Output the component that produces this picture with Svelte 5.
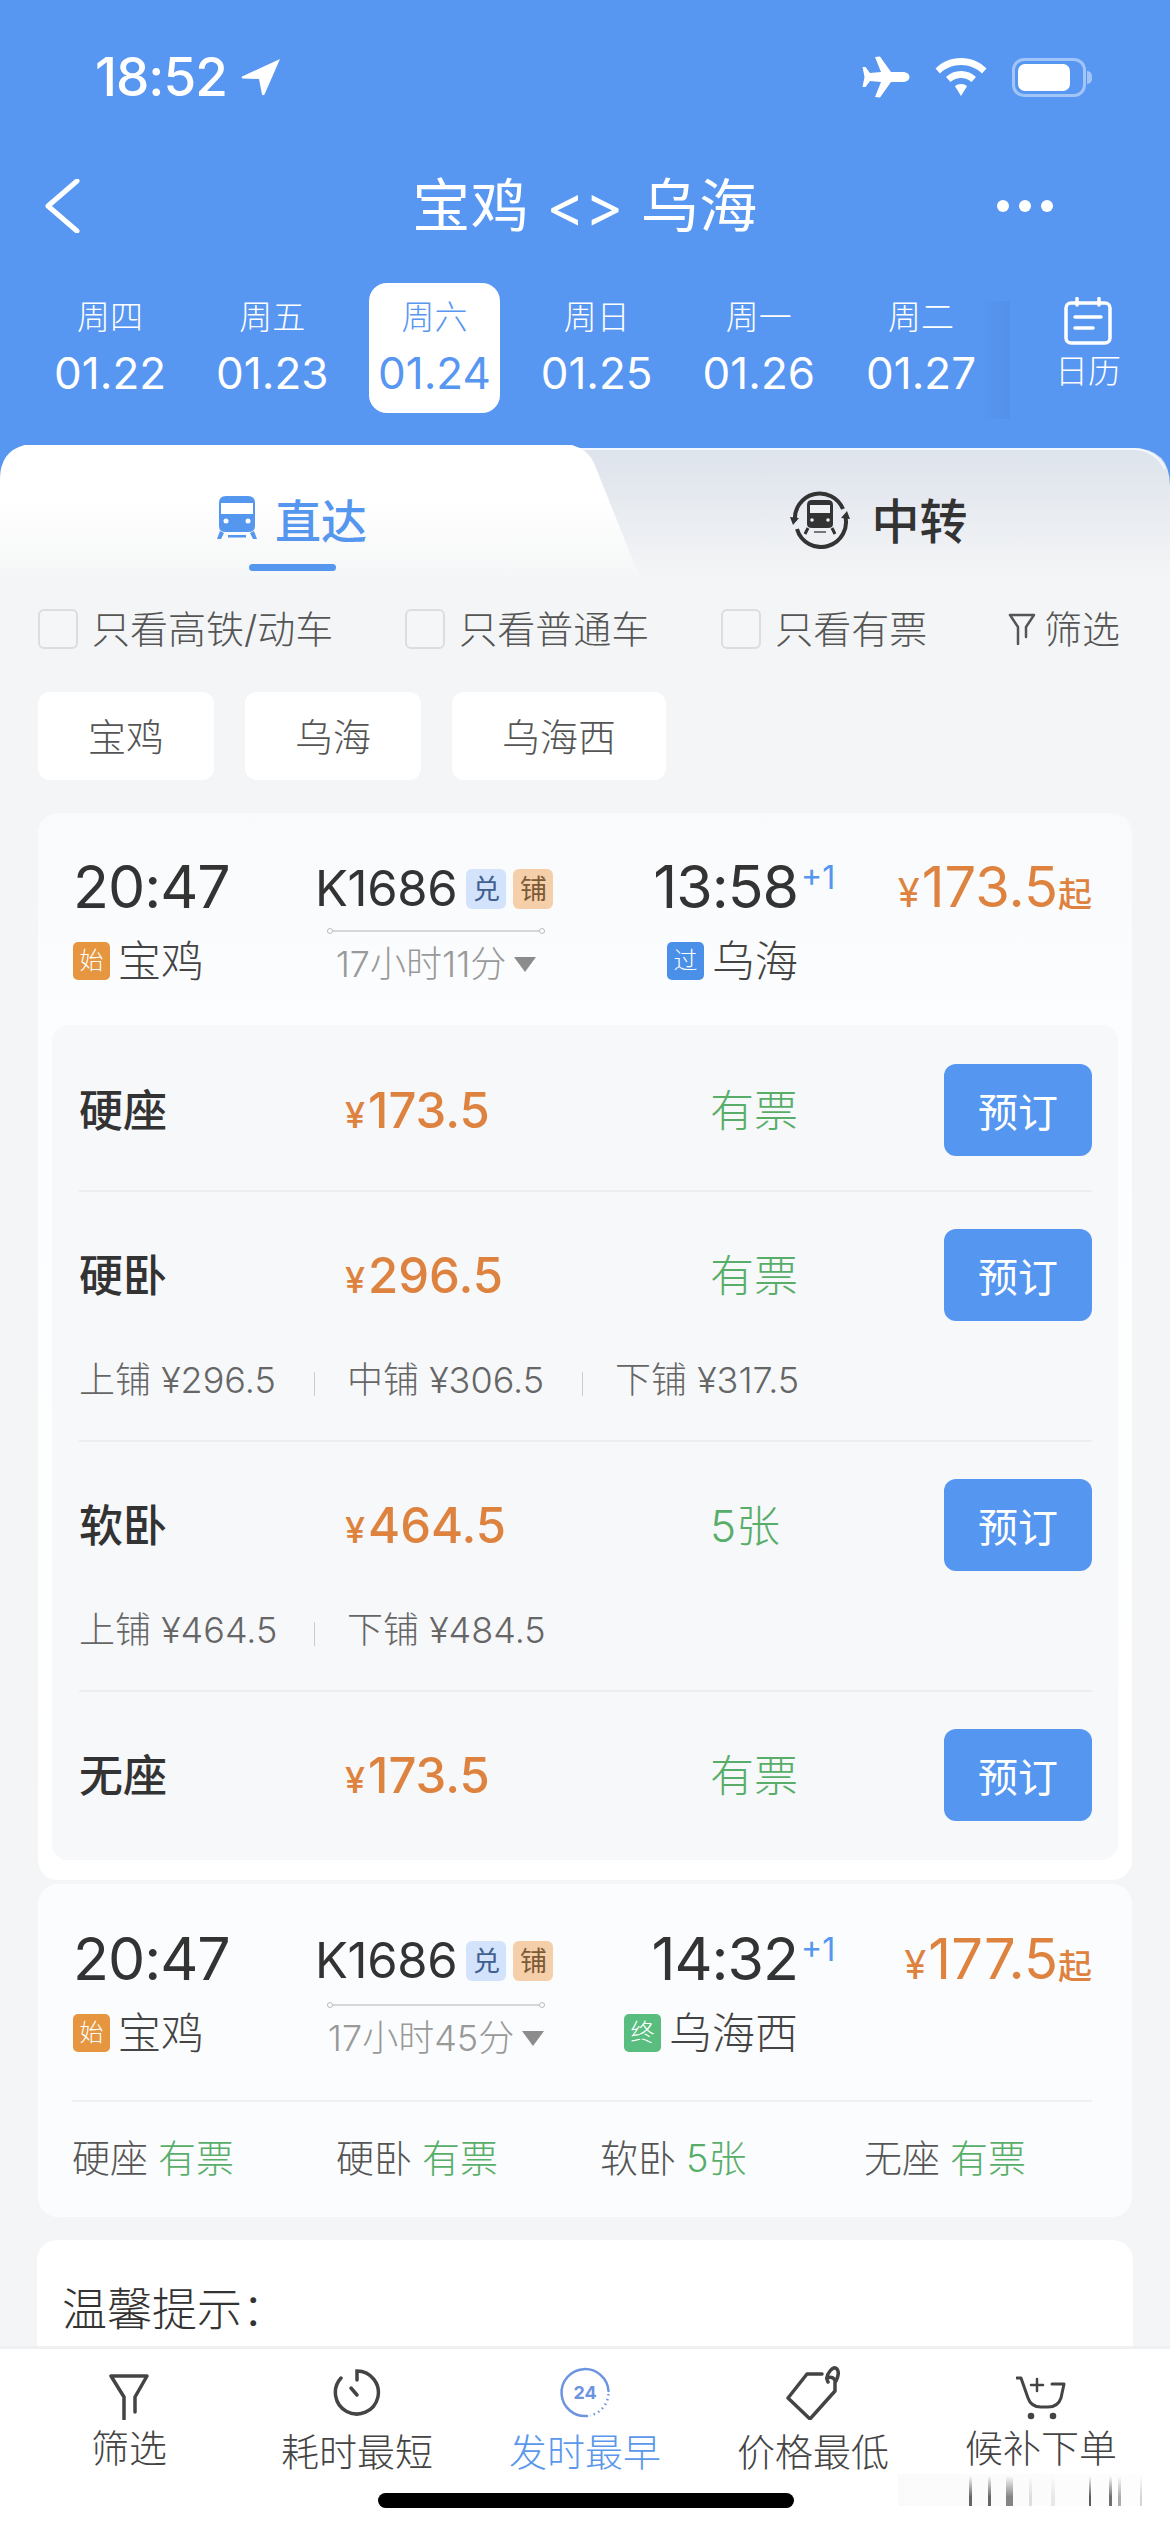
<script>
	const days = [
		['周四', '01.22'],
		['周五', '01.23'],
		['周六', '01.24'],
		['周日', '01.25'],
		['周一', '01.26'],
		['周二', '01.27']
	];
	const filters = ['只看高铁/动车', '只看普通车', '只看有票'];
	const stations = ['宝鸡', '乌海', '乌海西'];
	const seats = [
		{ name: '硬座', price: '173.5', left: '有票', berths: [] },
		{
			name: '硬卧',
			price: '296.5',
			left: '有票',
			berths: ['上铺 ¥296.5', '中铺 ¥306.5', '下铺 ¥317.5']
		},
		{ name: '软卧', price: '464.5', left: '5张', berths: ['上铺 ¥464.5', '下铺 ¥484.5'] },
		{ name: '无座', price: '173.5', left: '有票', berths: [] }
	];
	const summary = [
		['硬座', '有票'],
		['硬卧', '有票'],
		['软卧', '5张'],
		['无座', '有票']
	];
	// faint smudge strokes in the lower right corner of the tab bar
	const smudge = [
		{ x: 969, w: 3, o: 0.75 },
		{ x: 988, w: 3, o: 0.75 },
		{ x: 1006, w: 7, o: 0.6 },
		{ x: 1029, w: 3, o: 0.15 },
		{ x: 1051, w: 4, o: 0.1 },
		{ x: 1089, w: 2, o: 0.8 },
		{ x: 1109, w: 3, o: 0.7 },
		{ x: 1118, w: 3, o: 0.4 },
		{ x: 1140, w: 2, o: 0.2 }
	];
</script>

{#snippet trainHead(arrive, price, duration, tag, tagClass, station)}
	<div class="train-head">
		<div class="dep">
			<div class="time">20:47</div>
			<div class="stop"><span class="tag orange">始</span>宝鸡</div>
		</div>
		<div class="mid">
			<div class="code">
				K1686<span class="mini blue-mini">兑</span><span class="mini orange-mini">铺</span>
			</div>
			<div class="span-line"></div>
			<div class="duration">{duration}<i class="caret"></i></div>
		</div>
		<div class="arr">
			<div class="time">{arrive}<sup>+1</sup></div>
			<div class="stop"><span class="tag {tagClass}">{tag}</span>{station}</div>
		</div>
		<div class="from-price"><small>¥</small>{price}<em>起</em></div>
	</div>
{/snippet}

<div class="phone">
	<header class="top">
		<div class="status">
			<div class="clock">
				18:52
				<svg width="40" height="38" viewBox="0 0 40 38">
					<path d="M39 1 L1 18.5 Q0 20 2 20.5 L18 21 L21 36.5 Q22 38 23.5 36.5 Z" fill="#fff" />
				</svg>
			</div>
			<div class="sys">
				<svg width="48" height="42" viewBox="0 0 48 42">
					<path
						d="M13 1 L18 0.5 L29 16 L42 16 Q47.5 17 47.5 21 Q47.5 25 42 26 L29 26 L18 41.5 L13 41 L19 26 L8 25 L3.5 31 L0.5 31 L2.5 21 L0.5 11 L3.5 11 L8 17 L19 16 Z"
						fill="#fff"
					/>
				</svg>
				<svg width="52" height="38" viewBox="0 0 52 38">
					<path d="M26 0 C36 0 45 4 51.5 10.5 L47 15.5 C41.5 10 34 7 26 7 C18 7 10.5 10 5 15.5 L0.5 10.5 C7 4 16 0 26 0 Z" fill="#fff" />
					<path d="M26 13 C32 13 37 15 41 19 L36.5 24 C33.5 21.5 30 20 26 20 C22 20 18.5 21.5 15.5 24 L11 19 C15 15 20 13 26 13 Z" fill="#fff" />
					<path d="M26 26 C28.5 26 30.5 26.8 32 28.3 L26 38 L20 28.3 C21.5 26.8 23.5 26 26 26 Z" fill="#fff" />
				</svg>
				<div class="battery">
					<div class="level"></div>
				</div>
			</div>
		</div>

		<div class="nav">
			<svg class="back" width="36" height="54" viewBox="0 0 36 54">
				<path d="M33 2 L4 27 L33 52" fill="none" stroke="#fff" stroke-width="5" stroke-linecap="round" stroke-linejoin="round" />
			</svg>
			<h1>宝鸡 &lt;&gt; 乌海</h1>
			<div class="more"><i></i><i></i><i></i></div>
		</div>

		<div class="dates">
			<div class="day-list">
				{#each days as [week, date], i}
					<div class="day" class:active={i === 2}>
						<span>{week}</span>
						<b>{date}</b>
					</div>
				{/each}
			</div>
			<div class="calendar">
				<svg width="48" height="48" viewBox="0 0 48 48" fill="none" stroke="#fff" stroke-width="3.5" stroke-linecap="round">
					<rect x="2" y="6" width="44" height="40" rx="5" />
					<path d="M13 1.5 V8 M35 1.5 V8 M11 20 H37 M11 31 H29" />
				</svg>
				<span>日历</span>
			</div>
		</div>
	</header>

	<main class="content">
		<div class="tabs">
			<svg class="tab-shape" width="1170" height="150" viewBox="0 0 1170 150">
				<defs>
					<linearGradient id="backTab" x1="0" y1="0" x2="0" y2="1">
						<stop offset="0" stop-color="#dde3ec" />
						<stop offset="0.9" stop-color="#f4f5f6" />
					</linearGradient>
					<linearGradient id="frontTab" x1="0" y1="0" x2="0" y2="1">
						<stop offset="0.38" stop-color="#ffffff" />
						<stop offset="0.95" stop-color="#f4f5f6" />
					</linearGradient>
				</defs>
				<path d="M0 150 V40 Q0 5 40 5 H1132 Q1170 5 1170 43 V150 Z" fill="url(#backTab)" />
				<path d="M500 6 H1132 Q1155 6 1165 26" fill="none" stroke="#f2f8fd" stroke-width="2" />
				<path d="M0 150 V36 Q0 0 42 0 H555 Q585 0 594 20 L646 150 Z" fill="url(#frontTab)" />
			</svg>
			<div class="tab on">
				<svg width="40" height="44" viewBox="0 0 40 44">
					<path d="M9 0 H31 Q38 0 38 7 V30 Q38 36 31 36 H9 Q2 36 2 30 V7 Q2 0 9 0 Z" fill="#5596ef" />
					<path d="M3 35 L0 43 H4 L7 37 M37 35 L40 43 H36 L33 37" fill="#5596ef" />
					<rect x="4" y="7" width="32" height="11" fill="#fff" />
					<circle cx="9" cy="25" r="2.5" fill="#fff" />
					<circle cx="31" cy="25" r="2.5" fill="#fff" />
					<rect x="11" y="39" width="18" height="2.5" fill="#5596ef" />
				</svg>
				<span>直达</span>
				<i class="bar"></i>
			</div>
			<div class="tab">
				<svg width="62" height="62" viewBox="0 0 62 62" fill="none">
					<path d="M6 34 A25 25 0 0 1 54 22 M56 28 A25 25 0 0 1 8 42" stroke="#333" stroke-width="4" />
					<path d="M1 30 L10 31 L4 38 Z M61 32 L52 31 L58 24 Z" fill="#333" />
					<path d="M23 13 H39 Q44 13 44 18 V37 Q44 41 39 41 H23 Q18 41 18 37 V18 Q18 13 23 13 Z" fill="#333" />
					<path d="M19 41 L16 47 M43 41 L46 47" stroke="#333" stroke-width="3" />
					<rect x="21" y="18" width="20" height="8" fill="#eef0f4" />
					<circle cx="23" cy="33" r="1.8" fill="#eef0f4" />
					<circle cx="39" cy="33" r="1.8" fill="#eef0f4" />
					<rect x="25" y="44" width="12" height="2" fill="#777" />
				</svg>
				<span>中转</span>
			</div>
		</div>

		<div class="filters">
			<div class="checks">
				{#each filters as label}
					<label class="check"><i></i>{label}</label>
				{/each}
			</div>
			<div class="filter-btn">
				<svg width="28" height="32" viewBox="0 0 28 32" fill="none" stroke="#555" stroke-width="2.5" stroke-linejoin="round" stroke-linecap="round">
					<path d="M2 2 H26 L18 14 V24 M2 2 L10 14 V31" />
				</svg>
				筛选
			</div>
		</div>

		<div class="stations">
			{#each stations as station}
				<span>{station}</span>
			{/each}
		</div>

		<section class="train open">
			{@render trainHead('13:58', '173.5', '17小时11分', '过', 'blue', '乌海')}
			<div class="seat-panel">
				{#each seats as seat, i}
					<div class="seat" class:first={i === 0}>
						<div class="seat-row">
							<span class="seat-name">{seat.name}</span>
							<span class="seat-price"><small>¥</small>{seat.price}</span>
							<span class="seat-left">{seat.left}</span>
							<button>预订</button>
						</div>
						{#if seat.berths.length}
							<div class="berths">
								{#each seat.berths as berth}
									<span>{berth}</span>
								{/each}
							</div>
						{/if}
					</div>
				{/each}
			</div>
		</section>

		<section class="train closed">
			{@render trainHead('14:32', '177.5', '17小时45分', '终', 'green', '乌海西')}
			<div class="summary">
				{#each summary as [name, left]}
					<span>{name}<b>{left}</b></span>
				{/each}
			</div>
		</section>

		<section class="notice">温馨提示：</section>
	</main>

	<nav class="bar-bottom">
		<div class="item raised">
			<svg width="40" height="54" viewBox="0 0 40 54" fill="none" stroke="#444" stroke-width="3.5" stroke-linecap="round" stroke-linejoin="round">
				<path d="M2 10 H38 L26 31 V46 M2 10 L15 31 V53" />
			</svg>
			<span>筛选</span>
		</div>
		<div class="item">
			<svg width="48" height="54" viewBox="0 0 48 54" fill="none" stroke="#444" stroke-width="3.5" stroke-linecap="round">
				<path d="M24 14 V5 A21.5 21.5 0 1 1 8 12" />
				<path d="M18 22 L24 29" />
			</svg>
			<span>耗时最短</span>
		</div>
		<div class="item current">
			<svg width="52" height="54" viewBox="0 0 52 54" fill="none">
				<path d="M28 50 A23.5 23.5 0 1 1 49.5 25" stroke="#6c94e0" stroke-width="2.5" stroke-linecap="round" />
				<path d="M49.5 28 A23.5 23.5 0 0 1 31 49.5" stroke="#6c94e0" stroke-width="2.5" stroke-dasharray="1.5 3.5" />
				<text x="26" y="33" text-anchor="middle" font-size="18" font-weight="700" font-family="Inter, sans-serif" fill="#6c94e0">24</text>
			</svg>
			<span>发时最早</span>
		</div>
		<div class="item">
			<svg width="54" height="54" viewBox="0 0 54 54" fill="none" stroke="#444" stroke-width="3.5" stroke-linecap="round" stroke-linejoin="round">
				<path d="M36 8 H21 L2 32 L24 53 L49 25 V14 Q46 10 41 12" />
				<path d="M42 16 Q39 11 44 5 Q48 0 51 3 Q54 7 50 15" />
			</svg>
			<span>价格最低</span>
		</div>
		<div class="item raised">
			<svg width="50" height="54" viewBox="0 0 50 54" fill="none" stroke="#444" stroke-width="3" stroke-linecap="round" stroke-linejoin="round">
				<path d="M1 12 H5 L12 32 Q15 41 25 41 H32 Q42 41 45 32 L48 18 H36" />
				<path d="M21 13 V25 M15 19 H27" stroke-width="2.5" />
				<circle cx="15" cy="50" r="1.8" fill="#444" />
				<circle cx="37" cy="50" r="1.8" fill="#444" />
			</svg>
			<span>候补下单</span>
		</div>
		<i class="smudge-base"></i>
		{#each smudge as s}
			<i class="smudge" style="left: {s.x}px; width: {s.w}px; opacity: {s.o}"></i>
		{/each}
		<i class="home"></i>
	</nav>
</div>

<style>
	:global(body) {
		margin: 0;
		background: #f4f5f6;
	}

	.phone {
		width: 1170px;
		height: 2532px;
		display: flex;
		flex-direction: column;
		overflow: hidden;
		position: relative;
		font-family: Inter, 'Noto Sans CJK SC', sans-serif;
		color: #333;
		background: #f4f5f6;
	}

	.top {
		height: 445px;
		flex: none;
		background: #5796f1;
		color: #fff;
		box-sizing: border-box;
		padding-top: 52px;
	}

	.status {
		display: flex;
		justify-content: space-between;
		align-items: center;
		height: 50px;
		padding: 0 84px 0 95px;
	}

	.clock {
		display: flex;
		align-items: center;
		gap: 14px;
		font-size: 53px;
		font-weight: 500;
		letter-spacing: -1px;
	}

	.sys {
		display: flex;
		align-items: center;
		gap: 25px;
	}

	.battery {
		width: 74px;
		height: 39px;
		box-sizing: border-box;
		border: 3px solid rgba(255, 255, 255, 0.45);
		border-radius: 12px;
		padding: 3px;
		position: relative;
	}

	.battery::after {
		content: '';
		position: absolute;
		right: -9px;
		top: 10px;
		width: 5px;
		height: 13px;
		border-radius: 0 5px 5px 0;
		background: rgba(255, 255, 255, 0.45);
	}

	.level {
		width: 52px;
		height: 27px;
		background: #fff;
		border-radius: 7px;
	}

	.nav {
		height: 60px;
		margin-top: 74px;
		display: grid;
		grid-template-columns: 1fr auto 1fr;
		align-items: center;
	}

	.back {
		margin-left: 44px;
	}

	h1 {
		margin: 0;
		font-size: 58px;
		font-weight: 400;
		line-height: 60px;
		letter-spacing: 0.5px;
	}

	.more {
		display: flex;
		gap: 10px;
		justify-self: end;
		margin-right: 117px;
	}

	.more i {
		width: 12px;
		height: 12px;
		border-radius: 50%;
		background: #fff;
	}

	.dates {
		display: flex;
		margin-top: 47px;
		padding-left: 29px;
	}

	.day-list {
		display: flex;
	}

	.day {
		width: 162.2px;
		height: 130px;
		box-sizing: border-box;
		padding-bottom: 2px;
		display: flex;
		flex-direction: column;
		align-items: center;
		justify-content: center;
		gap: 9px;
		position: relative;
		z-index: 0;
	}

	.day span {
		font-size: 33px;
		font-weight: 300;
		line-height: 42px;
	}

	.day b {
		font-size: 44px;
		font-weight: 400;
		line-height: 52px;
	}

	.active {
		color: #5796f1;
	}

	.active::before {
		content: '';
		position: absolute;
		z-index: -1;
		left: 16px;
		right: 16px;
		top: 0;
		bottom: 0;
		background: #fff;
		border-radius: 18px;
	}

	.calendar {
		width: 164px;
		margin-left: 4px;
		display: flex;
		flex-direction: column;
		align-items: center;
		gap: 8px;
		padding-top: 14px;
		height: 116px;
		position: relative;
	}

	.calendar::before {
		content: '';
		position: absolute;
		left: -26px;
		top: 18px;
		bottom: -6px;
		width: 30px;
		background: linear-gradient(90deg, rgba(80, 140, 230, 0), rgba(74, 132, 220, 0.3));
	}

	.calendar span {
		font-size: 33px;
		font-weight: 300;
		line-height: 36px;
	}

	.content {
		flex: 1;
		min-height: 0;
		overflow: hidden;
	}

	.tabs {
		position: relative;
		height: 150px;
		margin-top: -2px;
		display: grid;
		grid-template-columns: 590px 1fr;
		background: #5796f1;
	}

	.tab-shape {
		position: absolute;
		inset: 0;
	}

	.tab {
		position: relative;
		display: flex;
		align-items: center;
		justify-content: center;
		height: 150px;
		gap: 20px;
		padding-right: 3px;
		font-size: 48px;
		font-weight: 500;
	}

	.tab.on {
		color: #5596ef;
		font-size: 46px;
		gap: 18px;
		padding-right: 6px;
	}

	.bar {
		position: absolute;
		left: 249px;
		top: 121px;
		width: 87px;
		height: 7px;
		border-radius: 4px;
		background: #5596ef;
	}

	.filters {
		display: flex;
		justify-content: space-between;
		align-items: center;
		padding: 15px 50px 0 38px;
	}

	.checks {
		display: flex;
		gap: 72px;
	}

	.check {
		display: flex;
		align-items: center;
		gap: 14px;
		font-size: 38px;
		font-weight: 300;
		color: #555;
		line-height: 42px;
	}

	.check i {
		width: 40px;
		height: 40px;
		box-sizing: border-box;
		border: 2px solid #dcdddf;
		border-radius: 6px;
		background: #f5f6f7;
	}

	.filter-btn {
		display: flex;
		align-items: center;
		gap: 8px;
		font-size: 38px;
		line-height: 42px;
		font-weight: 300;
		color: #555;
	}

	.stations {
		display: flex;
		gap: 31px;
		padding: 42px 38px 0;
	}

	.stations span {
		height: 88px;
		min-width: 176px;
		box-sizing: border-box;
		padding: 0 50px 4px;
		display: flex;
		align-items: center;
		justify-content: center;
		background: #fff;
		border-radius: 12px;
		font-size: 38px;
		font-weight: 300;
		color: #555;
	}

	.train {
		margin: 0 38px;
		background: #fbfcfd;
		border-radius: 20px;
		position: relative;
		box-sizing: border-box;
	}

	.open {
		margin-top: 33px;
		height: 1067px;
		padding: 14px 14px 20px 14px;
		background: linear-gradient(#f8fafc, #fcfdfe 20%, #fff);
	}

	.closed {
		margin-top: 4px;
		height: 333px;
		padding: 0 14px;
		background: #fbfcfd;
	}

	.train-head {
		display: grid;
		grid-template-columns: 242px 288px 195px 294px;
		padding: 41px 0 0 21px;
		height: 216px;
		box-sizing: border-box;
	}

	.open .train-head {
		padding-top: 26px;
		height: 198px;
	}

	.time {
		font-size: 59px;
		line-height: 68px;
		font-weight: 400;
		position: relative;
		color: #333;
		letter-spacing: -1px;
	}

	.time sup {
		position: absolute;
		left: 100%;
		top: 8px;
		margin-left: 3px;
		font-size: 32px;
		line-height: 34px;
		color: #5596ef;
		font-weight: 400;
		letter-spacing: 0;
		vertical-align: baseline;
	}

	.stop {
		margin-top: 13px;
		display: flex;
		align-items: center;
		gap: 8px;
		font-size: 43px;
		font-weight: 300;
		color: #444;
		line-height: 54px;
	}

	.tag {
		width: 37px;
		height: 38px;
		border-radius: 5px;
		display: inline-flex;
		align-items: center;
		justify-content: center;
		font-size: 24px;
		color: #fff;
		line-height: 1;
		font-weight: 300;
	}

	.orange {
		background: #e5963f;
	}

	.blue {
		background: #4b90e8;
	}

	.green {
		background: #58bd7f;
	}

	.arr {
		display: flex;
		flex-direction: column;
		align-items: flex-end;
	}

	.mid {
		display: flex;
		flex-direction: column;
		padding-top: 3px;
	}

	.code {
		display: flex;
		align-items: center;
		font-size: 49px;
		line-height: 66px;
		color: #333;
		letter-spacing: -0.3px;
	}

	.mini {
		width: 40px;
		height: 40px;
		border-radius: 6px;
		display: inline-flex;
		align-items: center;
		justify-content: center;
		font-size: 27px;
		line-height: 1;
		font-weight: 400;
	}

	.blue-mini {
		background: #d3e3fb;
		color: #40608f;
		margin-left: 9px;
	}

	.orange-mini {
		background: #f5cfa9;
		color: #7b5a37;
		margin-left: 7px;
	}

	.span-line {
		width: 218px;
		height: 2px;
		margin: 10px 0 0 12px;
		background: #d5d7da;
		position: relative;
	}

	.open .span-line {
		margin-top: 8px;
	}

	.span-line::before,
	.span-line::after {
		content: '';
		position: absolute;
		top: -2px;
		width: 6px;
		height: 6px;
		box-sizing: border-box;
		border-radius: 50%;
		border: 1px solid #bbb;
		background: #fff;
	}

	.span-line::before {
		left: 0;
	}

	.span-line::after {
		right: 0;
	}

	.duration {
		width: 242px;
		margin-top: 7px;
		display: flex;
		align-items: center;
		justify-content: center;
		font-size: 36px;
		line-height: 50px;
		font-weight: 300;
		color: #999;
		gap: 8px;
		white-space: nowrap;
	}

	.caret {
		width: 0;
		height: 0;
		border-left: 11px solid transparent;
		border-right: 11px solid transparent;
		border-top: 15px solid #8c8c8c;
	}

	.from-price {
		text-align: right;
		color: #de8240;
		font-size: 56px;
		line-height: 68px;
		white-space: nowrap;
	}

	.from-price small {
		font-size: 40px;
		margin-right: 2px;
	}

	.from-price em {
		font-style: normal;
		font-size: 34px;
		font-weight: 500;
	}

	.seat-panel {
		background: #f7f8fa;
		border-radius: 16px;
		padding: 5px 26px 0 27px;
		height: 835px;
		box-sizing: border-box;
	}

	.seat {
		border-top: 2px solid #eceef0;
	}

	.seat.first {
		border-top: none;
	}

	.seat-row {
		height: 166px;
		display: grid;
		grid-template-columns: 266px 365px 234px 148px;
		align-items: center;
	}

	.seat.first .seat-row {
		height: 160px;
	}

	.seat-name {
		font-size: 44px;
		font-weight: 500;
		color: #333;
		padding-bottom: 4px;
	}

	.seat-price {
		font-size: 49px;
		font-weight: 500;
		color: #de8240;
	}

	.seat-price small {
		font-size: 36px;
		margin-right: 3px;
	}

	.seat-left {
		font-size: 44px;
		font-weight: 300;
		color: #58ae69;
		padding-bottom: 4px;
	}

	button {
		width: 148px;
		height: 92px;
		border: none;
		border-radius: 12px;
		background: #5596f0;
		color: #fff;
		font-family: inherit;
		font-size: 40px;
		font-weight: 400;
		padding: 0;
	}

	.berths {
		display: flex;
		height: 82px;
		font-size: 36px;
		font-weight: 300;
		color: #666;
		align-items: flex-start;
	}

	.berths span {
		line-height: 44px;
		width: 268px;
		white-space: nowrap;
		position: relative;
	}

	.berths span + span::before {
		content: '';
		position: absolute;
		left: -33px;
		top: 14px;
		width: 1px;
		height: 24px;
		background: #ccc;
	}

	.summary {
		margin: 0 26px 0 20px;
		border-top: 2px solid #eef0f2;
		display: grid;
		grid-template-columns: repeat(4, 264px);
		padding-top: 31px;
		font-size: 38px;
		font-weight: 300;
		color: #555;
		line-height: 50px;
		white-space: nowrap;
	}

	.summary b {
		font-weight: 300;
		color: #58ae69;
		margin-left: 10px;
	}

	.notice {
		margin: 23px 37px 0;
		height: 200px;
		background: #fff;
		border-radius: 20px 20px 0 0;
		padding: 40px 25px;
		box-sizing: border-box;
		font-size: 45px;
		font-weight: 300;
		line-height: 60px;
	}

	.bar-bottom {
		position: absolute;
		left: 0;
		right: 0;
		bottom: 0;
		height: 186px;
		box-sizing: border-box;
		background: #fff;
		border-top: 3px solid #eff0f1;
		display: grid;
		grid-template-columns: repeat(5, 228px);
		padding: 17px 0 0 15px;
	}

	.item {
		display: flex;
		flex-direction: column;
		align-items: center;
		gap: 9px;
		font-size: 38px;
		font-weight: 300;
		color: #444;
		line-height: 46px;
	}

	.item.raised {
		gap: 5px;
	}

	.item.current {
		color: #5b98ec;
	}

	.smudge-base {
		position: absolute;
		left: 898px;
		bottom: 26px;
		width: 244px;
		height: 32px;
		background: linear-gradient(90deg, #fafafa, #fdfdfd);
	}

	.smudge {
		position: absolute;
		bottom: 26px;
		height: 30px;
		background: linear-gradient(rgba(120, 120, 120, 0), #333 70%);
	}

	.home {
		position: absolute;
		left: 378px;
		bottom: 24px;
		width: 416px;
		height: 15px;
		border-radius: 8px;
		background: #000;
	}
</style>
